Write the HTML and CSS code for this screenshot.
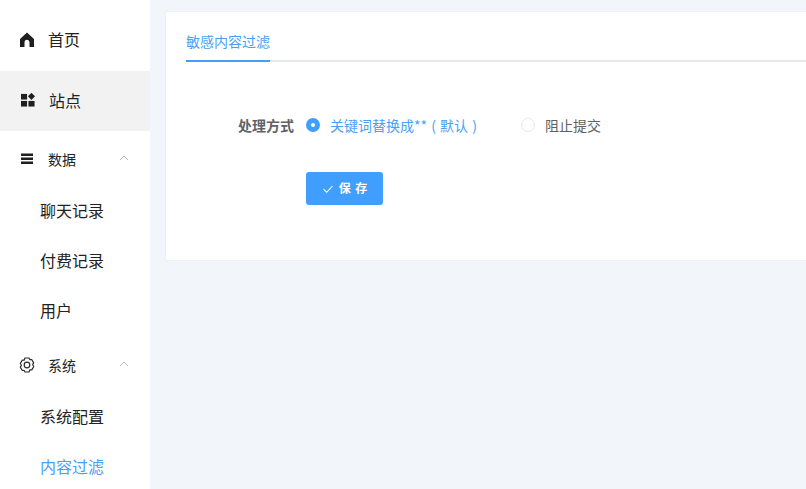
FILE: index.html
```html
<!DOCTYPE html>
<html lang="zh-CN">
<head>
<meta charset="utf-8">
<title>内容过滤</title>
<link rel="stylesheet" href="styles.css">
</head>
<body>
<div class="app">
  <aside class="sidebar">
    <a class="item home">
      <svg class="ico" viewBox="0 0 14 15"><path fill="#1f1f1f" d="M7 .5 0 7v8h4.500v-4.800a2.500 2.500 0 0 1 5 0V15H14V7z"/></svg>
      <span>首页</span>
    </a>
    <a class="item site">
      <svg class="ico" viewBox="1 1 15 15"><g fill="#1f1f1f"><rect x="1" y="2" width="6.500" height="6"/><rect x="1" y="9.500" width="6.500" height="6"/><rect x="9" y="9.500" width="6.500" height="6"/><path d="M12.200 .8 16 4.600 12.200 8.400 8.400 4.600z"/></g></svg>
      <span>站点</span>
    </a>
    <div class="group">
      <svg class="ico small" viewBox="0 0 14 14"><g fill="#1f1f1f"><rect x="1" y="1.500" width="12" height="2.500"/><rect x="1" y="5.500" width="12" height="2.500"/><rect x="1" y="9.500" width="12" height="2.500"/></g></svg>
      <span class="gname">数据</span>
      <svg class="arrow" viewBox="0 0 10 10"><path d="M1 7 5 3l4 4" fill="none" stroke="#b4b8bf" stroke-width="1"/></svg>
    </div>
    <a class="sub">聊天记录</a>
    <a class="sub">付费记录</a>
    <a class="sub">用户</a>
    <div class="group">
      <svg class="ico gear" viewBox="0 0 16 16"><g fill="none" stroke="#2b2b2b" stroke-width="1.200" stroke-linejoin="round"><path d="M6 1h4l.8 1.600 1.900-.1 2 3.400-1 1.500.1.600 1 1.500-2 3.400-1.900-.1L10 15H6l-.8-1.600-1.900.1-2-3.400 1-1.500v-.6l-1-1.500 2-3.400 1.900.1z"/><circle cx="8" cy="8" r="2.800"/></g></svg>
      <span class="gname">系统</span>
      <svg class="arrow" viewBox="0 0 10 10"><path d="M1 7 5 3l4 4" fill="none" stroke="#b4b8bf" stroke-width="1"/></svg>
    </div>
    <a class="sub">系统配置</a>
    <a class="sub active">内容过滤</a>
  </aside>
  <main class="main">
    <section class="card">
      <div class="tabs"><span class="tab">敏感内容过滤</span></div>
      <form class="form">
        <div class="row">
          <span class="label">处理方式</span>
          <span class="radio on"><i class="dot"></i><span class="rtext">关键词替换成** ( 默认 )</span></span>
          <span class="radio"><i class="dot"></i><span>阻止提交</span></span>
        </div>
        <button type="button" class="btn">
          <svg class="check" viewBox="0 0 12 12"><path d="M1.500 6.200 4.700 9.300 10.500 3" fill="none" stroke="#fff" stroke-width="1.100"/></svg>
          <span class="btn-text">保 存</span>
        </button>
      </form>
    </section>
  </main>
</div>
</body>
</html>
```
FILE: styles.css
```css
* { box-sizing: border-box; }
html, body { margin: 0; height: 100%; overflow: hidden; }
body { font-family: "Noto Sans CJK SC", "Liberation Sans", sans-serif; color: #303133; background: #f2f5f9; }
.app { display: flex; height: 489px; overflow: hidden; }
.sidebar { width: 150px; flex: none; background: #fff; padding-top: 11px; color: #222; }
.item { display: flex; align-items: center; height: 60px; padding: 0 0 4px 20px; font-size: 16px; }
.item .ico { width: 14px; height: 15px; margin-right: 14px; }
.site { background: #f2f2f2; padding-bottom: 2px; }
.site .ico { width: 14px; height: 14px; margin: 0 14px 0 1px; }
.group { display: flex; align-items: center; height: 56px; padding-left: 20px; font-size: 14px; position: relative; }
.group .ico { width: 14px; height: 14px; margin-right: 14px; }
.group .gear { width: 16px; height: 16px; margin: 0 13px 0 -1px; }
.arrow { width: 10px; height: 10px; position: absolute; right: 21px; top: 22px; }
.sub { display: flex; align-items: center; height: 50px; padding: 0 0 4px 40px; font-size: 16px; }
.sub.active { color: #4a9ff5; }
.main { flex: 1; min-width: 0; padding: 11px 0 0 15px; }
.card { height: 250px; background: #fff; border: 1px solid #eef0f5; border-right: 0; padding: 1px 0 0 20px; }
.tabs { height: 49px; border-bottom: 2px solid #e4e7ed; }
.tab { display: inline-block; height: 49px; line-height: 56px; font-size: 14px; color: #4a9ff5; border-bottom: 2px solid #409eff; }
.form { padding: 0; }
.row { display: flex; align-items: center; height: 40px; margin-top: 43px; padding-left: 52px; font-size: 14px; }
.label { width: 68px; font-weight: 700; color: #606266; }
.radio { display: flex; align-items: center; color: #606266; width: 215px; }
.radio.on { color: #4a9ff5; }
.rtext { word-spacing: 1px; }
.dot { width: 14px; height: 14px; border-radius: 50%; border: 1px solid #e4e7ed; background: #fff; margin-right: 10px; flex: none; }
.radio.on .dot { border: 5px solid #409eff; }
.btn { display: flex; align-items: center; justify-content: center; gap: 5px; margin: 27px 0 0 120px; width: 77px; height: 33px; padding: 0 0 0 1px; border: 0; border-radius: 3px; background: #409eff; color: #fff; font: 700 12px "Noto Sans CJK SC", sans-serif; letter-spacing: 1px; }
.btn-text { position: relative; top: -1px; }
.check { width: 12px; height: 12px; }
```
